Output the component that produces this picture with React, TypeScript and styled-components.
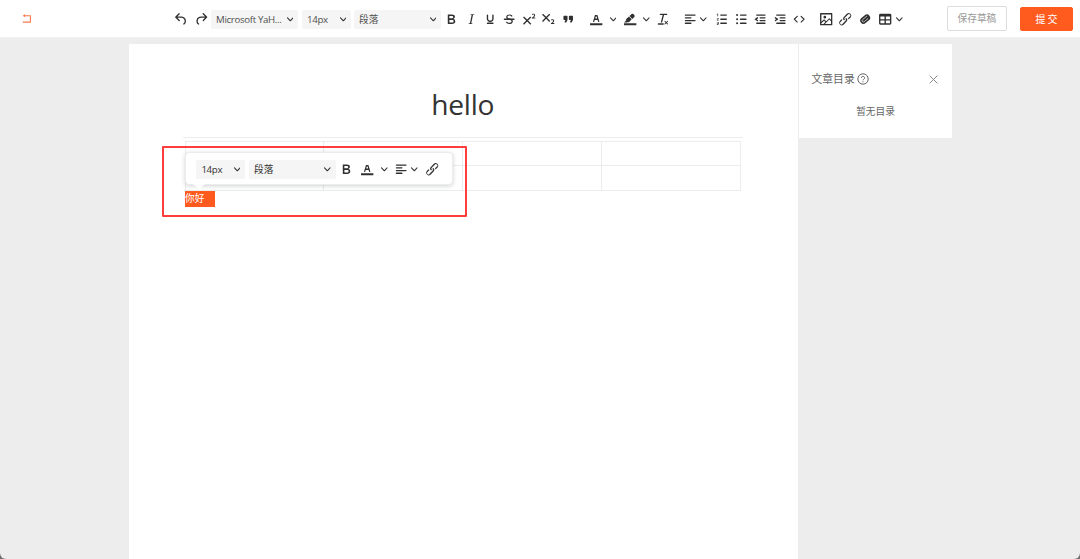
import React from 'react';
import styled, { createGlobalStyle } from 'styled-components';

const GlobalStyle = createGlobalStyle`
  * { box-sizing: border-box; }
  body {
    margin: 0;
    background: #6f6f6f;
    color: #333;
    font-family: 'Open Sans', 'Noto Sans CJK SC', sans-serif;
    font-size: 10px;
  }
`;

const paths = {
  undo: 'M6.4 8H12c3.7 0 6.2 2 6.8 5.1.6 2.7-.4 5.6-2.3 6.8a1 1 0 0 1-1-1.8c1.1-.6 1.8-2.7 1.4-4.6-.5-2.1-2.1-3.5-4.9-3.5H6.4l3.3 3.3a1 1 0 1 1-1.4 1.4l-5-5a1 1 0 0 1 0-1.4l5-5a1 1 0 0 1 1.4 1.4L6.4 8Z',
  redo: 'M17.6 10H12c-2.8 0-4.4 1.4-4.9 3.5-.4 2 .3 4 1.4 4.6a1 1 0 1 1-1 1.8c-2-1.2-2.9-4.1-2.3-6.8.6-3 3-5.1 6.8-5.1h5.6l-3.3-3.3a1 1 0 1 1 1.4-1.4l5 5a1 1 0 0 1 0 1.4l-5 5a1 1 0 0 1-1.4-1.4l3.3-3.3Z',
  bold: 'M7.8 19c-.3 0-.5 0-.6-.2l-.2-.5V5.7c0-.2 0-.4.2-.5l.6-.2h5c1.5 0 2.7.3 3.5 1 .7.6 1.1 1.4 1.1 2.5a3 3 0 0 1-.6 1.9c-.4.6-1 1-1.6 1.2.4.1.9.3 1.3.6s.8.7 1 1.2c.4.4.5 1 .5 1.6 0 1.3-.4 2.3-1.3 3-.8.7-2.1 1-3.8 1H7.8Zm5-8.3c.6 0 1.2-.1 1.6-.5.4-.3.6-.7.6-1.3 0-1.1-.8-1.7-2.3-1.7H9.3v3.5h3.4Zm.5 6c.7 0 1.3-.1 1.7-.4.4-.4.6-.9.6-1.5s-.2-1-.7-1.4c-.4-.3-1-.4-2-.4H9.4v3.8h4Z',
  italic: 'm16.7 4.7-.1.9h-.3c-.6 0-1 0-1.4.3-.3.3-.4.6-.5 1.1l-2.1 9.8v.6c0 .5.4.8 1.4.8h.2l-.2.8H8l.2-.8h.2c1.1 0 1.8-.5 2-1.5l2-9.8.1-.5c0-.6-.4-.8-1.4-.8h-.3l.2-.9h5.8Z',
  underline: 'M16 5c.6 0 1 .4 1 1v5.5a4 4 0 0 1-.4 1.8l-1 1.4a5.3 5.3 0 0 1-5.5 1 5 5 0 0 1-1.6-1c-.5-.4-.8-.9-1.1-1.4a4 4 0 0 1-.4-1.8V6c0-.6.4-1 1-1s1 .4 1 1v5.5c0 .3 0 .6.2 1l.6.7a3.3 3.3 0 0 0 2.2.8 3.4 3.4 0 0 0 2.2-.8c.3-.2.4-.5.6-.8l.2-.9V6c0-.6.4-1 1-1ZM8 17h8c.6 0 1 .4 1 1s-.4 1-1 1H8a1 1 0 0 1 0-2Z',
  strike: 'M15.6 8.5c-.5-.7-1-1.1-1.3-1.3-.6-.4-1.3-.6-2-.6-2.7 0-2.8 1.7-2.8 2.1 0 1.6 1.8 2 3.2 2.3 4.4.9 4.6 2.8 4.6 3.9 0 1.4-.7 4.1-5 4.1A6.2 6.2 0 0 1 7 16.4l1.5-1.1c.4.6 1.6 2 3.7 2 1.6 0 2.5-.4 3-1.2.4-.8.3-2-.8-2.6-.7-.4-1.6-.7-2.9-1-1-.2-3.9-.8-3.9-3.6C7.6 6 10.3 5 12.4 5c2.9 0 4.2 1.6 4.7 2.4l-1.5 1.1Z',
  superscript: 'M15 9.4 10.4 14l4.6 4.6-1.4 1.4L9 15.4 4.4 20 3 18.6 7.6 14 3 9.4 4.4 8 9 12.6 13.6 8 15 9.4Zm5.9 1.6h-5v-1l1-.8 1.7-1.6c.3-.5.5-.9.5-1.3 0-.3 0-.5-.2-.7-.2-.2-.5-.3-.9-.3l-.8.2-.7.4-.4-1.2c.2-.2.5-.4 1-.5.3-.2.8-.2 1.2-.2.8 0 1.4.2 1.8.6.4.4.6 1 .6 1.6 0 .5-.2 1-.5 1.5l-1.3 1.4-.6.5h2.6V11Z',
  subscript: 'm10.4 10 4.6 4.6-1.4 1.4L9 11.4 4.4 16 3 14.6 7.6 10 3 5.4 4.4 4 9 8.6 13.6 4 15 5.4 10.4 10ZM21 19h-5v-1l1-.8 1.7-1.6c.3-.4.5-.8.5-1.2 0-.3 0-.6-.2-.7-.2-.2-.5-.3-.9-.3a2 2 0 0 0-.8.2l-.7.3-.4-1.1 1-.6 1.2-.2c.8 0 1.4.3 1.8.7.4.4.6.9.6 1.5s-.2 1.1-.5 1.6a8 8 0 0 1-1.3 1.3l-.6.6h2.6V19Z',
  quote: 'M7.5 17h.9c.4 0 .7-.2.9-.6L11 13V8c0-.6-.4-1-1-1H6a1 1 0 0 0-1 1v4c0 .6.4 1 1 1h2l-1.3 2.7a1 1 0 0 0 .8 1.3Zm8 0h.9c.4 0 .7-.2.9-.6L19 13V8c0-.6-.4-1-1-1h-4a1 1 0 0 0-1 1v4c0 .6.4 1 1 1h2l-1.3 2.7a1 1 0 0 0 .8 1.3Z',
  color: 'M3 18h18v3H3zM8.7 16h-.8a.5.5 0 0 1-.5-.6l2.7-9c.1-.3.3-.4.5-.4h2.8c.2 0 .4.1.5.4l2.7 9a.5.5 0 0 1-.5.6h-.8a.5.5 0 0 1-.4-.4l-.7-2.2c0-.3-.3-.4-.5-.4h-3.4c-.2 0-.4.1-.5.4l-.7 2.2c0 .3-.2.4-.4.4Zm2.6-7.6-.6 2a.5.5 0 0 0 .5.6h1.6a.5.5 0 0 0 .5-.6l-.6-2c0-.3-.3-.4-.5-.4h-.4c-.2 0-.4.1-.5.4Z',
  highlight: 'M3 18h18v3H3zM7.7 16.7H3l3.3-3.3-.7-.8L10.2 8l4 4.1-4 4.2c-.2.2-.6.2-.8 0l-.6-.7-1.1 1.1zm5-7.5L11 7.4l3-2.9a2 2 0 0 1 2.6 0L18 6c.7.7.7 2 0 2.7l-2.9 2.9-1.8-1.8-.5-.6Z',
  clear: 'M13.2 6a1 1 0 0 1 0 .2l-2.6 10a1 1 0 0 1-1 .8h-.2a.8.8 0 0 1-.8-1l2.6-10H8a1 1 0 1 1 0-2h9a1 1 0 0 1 0 2h-3.8ZM5 18h7a1 1 0 0 1 0 2H5a1 1 0 0 1 0-2Zm13 1.5L16.5 18 15 19.5a.7.7 0 0 1-1-1l1.5-1.5-1.5-1.5a.7.7 0 0 1 1-1l1.5 1.5 1.5-1.5a.7.7 0 0 1 1 1L17.5 17l1.5 1.5a.7.7 0 0 1-1 1Z',
  align: 'M5 5h14a1 1 0 0 1 0 2H5a1 1 0 1 1 0-2Zm0 4h8a1 1 0 0 1 0 2H5a1 1 0 1 1 0-2Zm0 8h8a1 1 0 0 1 0 2H5a1 1 0 0 1 0-2Zm0-4h14a1 1 0 0 1 0 2H5a1 1 0 0 1 0-2Z',
  ordered: 'M10 17h8a1 1 0 0 1 0 2h-8a1 1 0 0 1 0-2Zm0-6h8a1 1 0 0 1 0 2h-8a1 1 0 0 1 0-2Zm0-6h8a1 1 0 0 1 0 2h-8a1 1 0 1 1 0-2ZM6 4v3.5c0 .3-.2.5-.5.5a.5.5 0 0 1-.5-.5V5h-.5a.5.5 0 0 1 0-1H6Zm-1 8.8.2.2h1.3c.3 0 .5.2.5.5s-.2.5-.5.5H4.9a1 1 0 0 1-.9-1V13c0-.4.3-.8.6-1l1.2-.4.2-.3a.2.2 0 0 0-.2-.2H4.5a.5.5 0 0 1-.5-.5c0-.3.2-.5.5-.5h1.6c.5 0 .9.4.9 1v.1c0 .4-.3.8-.6 1l-1.2.4-.2.3ZM7 17v2c0 .6-.4 1-1 1H4.5a.5.5 0 0 1 0-1h1.2c.2 0 .3-.1.3-.3 0-.2-.1-.3-.3-.3H4.4a.4.4 0 1 1 0-.8h1.3c.2 0 .3-.1.3-.3 0-.2-.1-.3-.3-.3H4.5a.5.5 0 1 1 0-1H6c.6 0 1 .4 1 1Z',
  bullets: 'M11 5h8a1 1 0 0 1 0 2h-8a1 1 0 0 1 0-2Zm0 6h8a1 1 0 0 1 0 2h-8a1 1 0 0 1 0-2Zm0 6h8a1 1 0 0 1 0 2h-8a1 1 0 0 1 0-2ZM6 4.5a1.5 1.5 0 1 1 0 3 1.5 1.5 0 0 1 0-3Zm0 6a1.5 1.5 0 1 1 0 3 1.5 1.5 0 0 1 0-3Zm0 6a1.5 1.5 0 1 1 0 3 1.5 1.5 0 0 1 0-3Z',
  outdent: 'M7 5h12a1 1 0 0 1 0 2H7a1 1 0 1 1 0-2Zm5 4h7a1 1 0 0 1 0 2h-7a1 1 0 0 1 0-2Zm0 4h7a1 1 0 0 1 0 2h-7a1 1 0 0 1 0-2Zm-5 4h12a1 1 0 0 1 0 2H7a1 1 0 0 1 0-2Zm1.6-3.8a1 1 0 0 1-1.2 1.6l-3-2a1 1 0 0 1 0-1.6l3-2a1 1 0 0 1 1.2 1.6L6.8 12l1.8 1.2Z',
  indent: 'M7 5h12a1 1 0 0 1 0 2H7a1 1 0 1 1 0-2Zm5 4h7a1 1 0 0 1 0 2h-7a1 1 0 0 1 0-2Zm0 4h7a1 1 0 0 1 0 2h-7a1 1 0 0 1 0-2Zm-5 4h12a1 1 0 0 1 0 2H7a1 1 0 0 1 0-2Zm-2.6-3.8L6.2 12l-1.8-1.2a1 1 0 0 1 1.2-1.6l3 2a1 1 0 0 1 0 1.6l-3 2a1 1 0 1 1-1.2-1.6Z',
  code: 'M9.8 15.7c.3.3.3.8 0 1-.3.4-.9.4-1.2 0l-4.4-4.1a.8.8 0 0 1 0-1.2l4.4-4.2c.3-.3.9-.3 1.2 0 .3.3.3.8 0 1.1L6 12l3.8 3.7ZM14.2 15.7c-.3.3-.3.8 0 1 .4.4.9.4 1.2 0l4.4-4.1c.3-.3.3-.9 0-1.2l-4.4-4.2a.8.8 0 0 0-1.2 0c-.3.3-.3.8 0 1.1L18 12l-3.8 3.7Z',
  image: 'm5 15.7 3.3-3.2c.3-.3.7-.3 1 0L12 15l4.1-4c.3-.4.8-.4 1 0l2 1.9V5H5v10.7ZM5 18V19h3l2.8-2.9-2-2L5 17.9Zm14-3-2.5-2.4-6.4 6.5H19v-4ZM4 3h16c.6 0 1 .4 1 1v16c0 .6-.4 1-1 1H4a1 1 0 0 1-1-1V4c0-.6.4-1 1-1Zm6 8a2 2 0 1 0 0-4 2 2 0 0 0 0 4Z',
  link: 'M6.2 12.3a1 1 0 0 1 1.4 1.4l-2 2a2 2 0 1 0 2.6 2.8l4.8-4.8a1 1 0 0 0 0-1.4 1 1 0 1 1 1.4-1.3 2.9 2.9 0 0 1 0 4L9.6 20a3.9 3.9 0 0 1-5.5-5.5l2-2Zm11.6-.6a1 1 0 0 1-1.4-1.4l2-2a2 2 0 1 0-2.6-2.8L11 10.3a1 1 0 0 0 0 1.4A1 1 0 1 1 9.6 13a2.9 2.9 0 0 1 0-4L14.4 4a3.9 3.9 0 0 1 5.5 5.5l-2 2Z',
  table: 'M19 4a2 2 0 0 1 2 2v12a2 2 0 0 1-2 2H5a2 2 0 0 1-2-2V6c0-1.1.9-2 2-2h14ZM5 14v4h6v-4H5Zm14 0h-6v4h6v-4Zm0-6h-6v4h6V8ZM5 12h6V8H5v4Z',
};

type IconName = keyof typeof paths;

const Shell = styled.div`
  position: relative;
  height: 559px;
  display: flex;
  flex-direction: column;
  background: #ededed;
  border-radius: 0 0 6px 6px;
  overflow: hidden;
`;

const Header = styled.header`
  flex: none;
  height: 38px;
  display: flex;
  align-items: center;
  background: #fff;
  border-bottom: 1px solid #f1f1f1;
  padding: 0 6.8px 0 22px;
`;

const BackIcon = styled.svg`
  flex: none;
  width: 10px;
  height: 10px;
  margin-right: 139.1px;
`;

const Group = styled.div<{ $left?: number }>`
  display: flex;
  align-items: center;
  flex: none;
  margin-left: ${(p) => p.$left ?? 0}px;

  ${Header} > & {
    padding-top: 1.4px;
  }
`;

const Slot = styled.span<{ $w?: number }>`
  flex: none;
  width: ${(p) => p.$w ?? 19.4}px;
  height: 20px;
  display: flex;
  align-items: center;
  justify-content: center;
`;

const Glyph = styled.svg`
  flex: none;
  width: 16.4px;
  height: 16.4px;
  fill: #303030;
`;

const ChevronSvg = styled.svg`
  flex: none;
  width: 6.6px;
  height: 6.6px;
  fill: #333;
`;

const Select = styled.div<{ $w: number; $left?: number; $dark?: boolean }>`
  flex: none;
  width: ${(p) => p.$w}px;
  height: 19px;
  margin-left: ${(p) => p.$left ?? 0}px;
  padding: 0 5px;
  display: flex;
  align-items: center;
  justify-content: space-between;
  border-radius: 2px;
  background: #f5f5f5;
  color: ${(p) => (p.$dark ? '#333' : '#505050')};
  font-size: 9.7px;
  line-height: 19px;
  white-space: nowrap;
`;

const Latin = styled.span`
  letter-spacing: -0.34px;
`;

const Button = styled.button<{ $primary?: boolean }>`
  flex: none;
  height: ${(p) => (p.$primary ? 24 : 25)}px;
  width: ${(p) => (p.$primary ? 53.5 : 60)}px;
  padding: 0;
  border-radius: 2px;
  border: 1px solid ${(p) => (p.$primary ? '#ff5b1f' : '#dcdcdc')};
  background: ${(p) => (p.$primary ? '#ff5b1f' : '#fff')};
  color: ${(p) => (p.$primary ? '#fff' : '#999')};
  font-family: inherit;
  font-size: ${(p) => (p.$primary ? 10 : 9.7)}px;
  line-height: 20px;
  word-spacing: -0.5px;
`;

const Actions = styled.div`
  margin-left: auto;
  display: flex;
  align-items: center;
  gap: 12.8px;
`;

const Workspace = styled.main`
  flex: 1;
  display: flex;
  align-items: flex-start;
  padding: 6px 128px 0 128.5px;
`;

const Paper = styled.article`
  width: 669.5px;
  height: 515px;
  flex: none;
  background: #fff;
  padding: 0 55px 0 54px;
`;

const Title = styled.h1`
  margin: 0 0 3px;
  height: 94px;
  padding-top: 39px;
  border-bottom: 1px solid #ececec;
  text-align: center;
  font-size: 28.2px;
  letter-spacing: -0.25px;
  line-height: 42px;
  font-weight: 400;
  color: #333;
`;

const Grid = styled.table`
  width: 556px;
  margin-left: 2px;
  border-collapse: collapse;
  table-layout: fixed;
`;

const Cell = styled.td<{ $h: number }>`
  height: ${(p) => p.$h}px;
  padding: 0;
  border: 1px solid #ececec;
`;

const Selection = styled.span`
  display: block;
  width: 30px;
  height: 16px;
  margin-left: 2.5px;
  background: #ff5b1f;
  color: #fff;
  font-size: 9.7px;
  line-height: 16px;
`;

const Outline = styled.aside`
  width: 153px;
  height: 94px;
  flex: none;
  margin-left: 1px;
  background: #fff;
  padding: 28px 14.5px 0 12.5px;
  color: #666;
`;

const OutlineHead = styled.div`
  display: flex;
  align-items: center;
  height: 14px;
  font-size: 10.8px;
  line-height: 14px;
`;

const HelpIcon = styled.svg`
  width: 12px;
  height: 12px;
  margin-left: 2px;
`;

const CloseIcon = styled.svg`
  width: 9px;
  height: 9px;
  margin-left: auto;
`;

const Empty = styled.div`
  margin: 19px -1px 0 0;
  padding-left: 1px;
  text-align: center;
  font-size: 9.7px;
  line-height: 14px;
`;

const Marker = styled.div`
  position: absolute;
  left: 162px;
  top: 146px;
  width: 305px;
  height: 71px;
  border: 2px solid #ff3d3d;
  border-radius: 1px;
`;

const Bubble = styled.div`
  position: absolute;
  left: 185px;
  top: 152px;
  width: 268px;
  height: 33px;
  display: flex;
  align-items: center;
  padding: 1.6px 0 0 10.4px;
  background: #fff;
  border: 1px solid #ececec;
  border-radius: 4px;
  box-shadow: 0 1px 4px rgba(40, 60, 60, 0.22);

  &::after {
    content: '';
    position: absolute;
    left: 7px;
    top: 31px;
    border: 6px solid transparent;
    border-top: 5px solid #fff;
    border-bottom: 0;
  }
`;

const Icon = ({ name, w }: { name: IconName; w?: number }) => (
  <Slot $w={w}>
    <Glyph viewBox="0 0 24 24">
      <path fillRule="evenodd" d={paths[name]} />
      {name === 'strike' && <path d="M5 11h14a1 1 0 0 1 0 2H5a1 1 0 0 1 0-2Z" />}
    </Glyph>
  </Slot>
);

const Chevron = () => (
  <ChevronSvg viewBox="0 0 10 10">
    <path d="M8.7 2.2c.3-.3.8-.3 1 0 .4.4.4.9 0 1.2L5.7 7.8c-.3.3-.9.3-1.2 0L.2 3.4a.8.8 0 0 1 0-1.2c.3-.3.8-.3 1.1 0L5 6l3.7-3.8Z" />
  </ChevronSvg>
);

const Attachment = () => (
  <Slot>
    <Glyph viewBox="0 0 24 24">
      <g transform="rotate(-40 12 12)">
        <rect x="4" y="7.2" width="16" height="9.6" rx="4.8" />
        <path d="M17 10.1H8.7a1.9 1.9 0 0 0 0 3.8H16" fill="none" stroke="#fff" strokeWidth="0.9" />
      </g>
    </Glyph>
  </Slot>
);

const textIcons: IconName[] = ['bold', 'italic', 'underline', 'strike', 'superscript', 'subscript', 'quote'];
const listIcons: IconName[] = ['ordered', 'bullets', 'outdent', 'indent', 'code'];

export default function App() {
  return (
    <Shell>
      <GlobalStyle />
      <Header>
        <BackIcon viewBox="0 0 10 10" fill="none" stroke="#ff7a4c" strokeWidth="1.1">
          <path d="M1.5 1.7H8.4V8.1H.8" />
          <path d="M3.2.1.9 1.7 3.2 3.3Z" fill="#ff7a4c" stroke="none" />
        </BackIcon>
        <Group>
          <Icon name="undo" w={20} />
          <Icon name="redo" w={20} />
          <Select $w={87}><Latin>Microsoft YaH...</Latin><Chevron /></Select>
          <Select $w={49} $left={4}><Latin>14px</Latin><Chevron /></Select>
          <Select $w={87} $left={3}>段落<Chevron /></Select>
        </Group>
        <Group $left={0.6}>
          {textIcons.map((name) => <Icon key={name} name={name} />)}
        </Group>
        <Group $left={9.2}>
          <Icon name="color" />
          <Slot $w={14}><Chevron /></Slot>
          <Icon name="highlight" />
          <Slot $w={14}><Chevron /></Slot>
          <Icon name="clear" />
        </Group>
        <Group $left={8}>
          <Icon name="align" />
          <Chevron />
        </Group>
        <Group $left={5.4}>
          {listIcons.map((name) => <Icon key={name} name={name} />)}
        </Group>
        <Group $left={7.2}>
          <Icon name="image" />
          <Icon name="link" />
          <Attachment />
          <Icon name="table" w={22} />
          <Chevron />
        </Group>
        <Actions>
          <Button>保存草稿</Button>
          <Button $primary>提 交</Button>
        </Actions>
      </Header>
      <Workspace>
        <Paper>
          <Title>hello</Title>
          <Grid>
            <tbody>
              <tr><Cell $h={24} /><Cell $h={24} /><Cell $h={24} /><Cell $h={24} /></tr>
              <tr><Cell $h={25} /><Cell $h={25} /><Cell $h={25} /><Cell $h={25} /></tr>
            </tbody>
          </Grid>
          <Selection>你好</Selection>
        </Paper>
        <Outline>
          <OutlineHead>
            文章目录
            <HelpIcon viewBox="0 0 12 12" fill="none" stroke="#666" strokeWidth="1">
              <circle cx="6" cy="6" r="5.2" />
              <path d="M4.4 4.9a1.6 1.5 0 1 1 2.3 1.3Q6 6.5 6 7.3M6 8.3v1" />
            </HelpIcon>
            <CloseIcon viewBox="0 0 9 9" stroke="#888" strokeWidth="1">
              <path d="m.7.7 7.6 7.6m0-7.6L.7 8.3" />
            </CloseIcon>
          </OutlineHead>
          <Empty>暂无目录</Empty>
        </Outline>
      </Workspace>
      <Bubble>
        <Select $w={49} $dark><Latin>14px</Latin><Chevron /></Select>
        <Select $w={87} $left={3.6} $dark>段落<Chevron /></Select>
        <Icon name="bold" w={20} />
        <Group $left={1}>
          <Icon name="color" w={21} />
          <Slot $w={13}><Chevron /></Slot>
        </Group>
        <Icon name="align" w={20} />
        <Chevron />
        <Group $left={5.4}><Icon name="link" /></Group>
      </Bubble>
      <Marker />
    </Shell>
  );
}
